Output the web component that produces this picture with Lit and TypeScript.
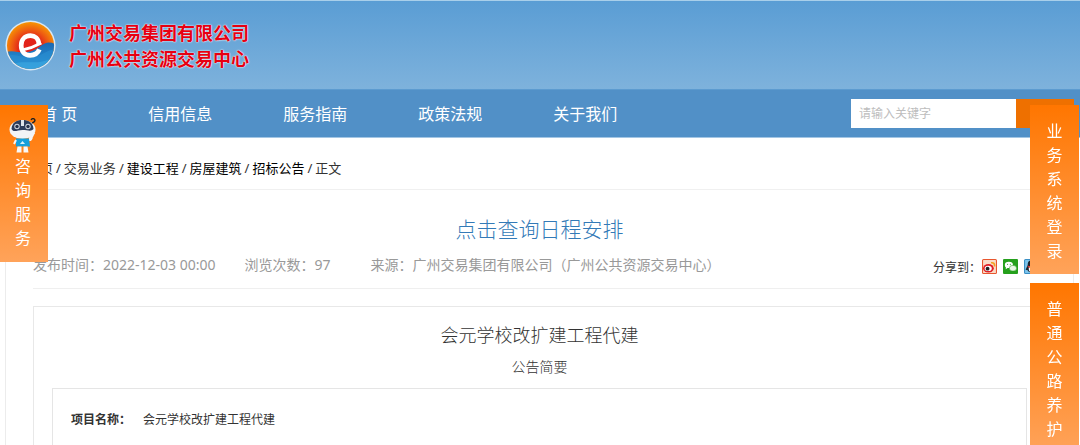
import { LitElement, html, css, svg } from "lit";
import { customElement, property } from "lit/decorators.js";

const logo = svg`
  <defs>
    <radialGradient id="sun" cx="0.5" cy="0.55" r="0.55">
      <stop offset="0.4" stop-color="#e2231a" />
      <stop offset="0.65" stop-color="#ee5a12" />
      <stop offset="1" stop-color="#f8a400" />
    </radialGradient>
    <linearGradient id="sea" x1="0" y1="0" x2="0" y2="1">
      <stop offset="0" stop-color="#1a68b4" />
      <stop offset="1" stop-color="#2a9fdc" />
    </linearGradient>
    <clipPath id="disc"><circle cx="26" cy="26" r="24" /></clipPath>
  </defs>
  <circle cx="26" cy="26" r="25.5" fill="#d9e8f4" />
  <g clip-path="url(#disc)">
    <rect width="52" height="52" fill="url(#sun)" />
    <path d="M0 33C8 30 14 34 22 33C33 32 38 23 44 23Q49 23 52 25V52H0Z" fill="url(#sea)" />
    <path d="M0 36C12 33 20 41 32 37C41 34 44 30 52 30V52H0Z" fill="#2b8fd2" opacity="0.6" />
    <path d="M8 45C20 40 32 47 48 39V52H8Z" fill="#45b4e8" opacity="0.45" />
  </g>
  <path d="M34.500 25C34.500 18.500 30 16 26 16C20 16 16.500 20.500 16.500 26C16.500 32 20 36 25.500 36C30 36 33.500 34 35 30" fill="none" stroke="#fff" stroke-width="4.800" />
  <path d="M18 30.500Q28 28.500 37 23.500" fill="none" stroke="#fff" stroke-width="3" />
`;

const robot = svg`
  <path d="M22 14l4 1-4 8h-3z" fill="#f4f6f8" />
  <ellipse cx="13.500" cy="11.500" rx="13" ry="9.500" fill="#f2f4f6" />
  <path d="M2.500 11C3 4 8 2 13.500 2S24 4 24.500 11C22 14 19 12 13.500 12S5 15 2.500 11Z" fill="#2e3d5b" />
  <rect x="12" y="2" width="3" height="6" fill="#dfe5ec" />
  <circle cx="8" cy="8.500" r="2.700" fill="#cfd6e0" /><circle cx="19" cy="8.500" r="2.700" fill="#cfd6e0" />
  <circle cx="8" cy="8.500" r="1.700" fill="#24304a" /><circle cx="19" cy="8.500" r="1.700" fill="#24304a" />
  <path d="M22 2q2-3 4 0q0 2-3 3" fill="none" stroke="#222" stroke-width="1.300" />
  <path d="M7 20.500h13l1 8H7z" fill="#159fdb" />
  <path d="M11 26l2.500-3 2.500 3z" fill="#d9f2fc" />
  <path d="M7 22l-2 4M21 22l2-2" stroke="#f4f6f8" stroke-width="2" />
  <path d="M8.500 28.500h4v6h-5zM14.500 28.500h4l1 6h-5z" fill="#f7f8fa" />
`;

const shareIcons = [
  { name: "新浪微博", art: svg`
    <rect x="0.500" y="0.500" width="13" height="13" rx="1" fill="#f9dcc8" stroke="#e8562e" />
    <ellipse cx="6" cy="8.600" rx="5" ry="4" fill="#e01e25" />
    <ellipse cx="5.800" cy="8.800" rx="3.300" ry="2.500" fill="#fff" />
    <circle cx="5.200" cy="9" r="1.800" fill="#222" />
    <path d="M8.500 3.500q3.500-.5 3.300 3.500" fill="none" stroke="#f3a01c" stroke-width="1.500" />` },
  { name: "微信", art: svg`
    <rect width="14" height="14" rx="1" fill="#25a01c" />
    <ellipse cx="5.500" cy="5.500" rx="3.800" ry="3" fill="#fff" /><path d="M3 7l-.5 2.500 2.500-1.500z" fill="#fff" />
    <ellipse cx="9.300" cy="8.600" rx="3.400" ry="2.700" fill="#e9f7e6" stroke="#25a01c" stroke-width="0.500" />
    <circle cx="4.300" cy="5" r="0.500" fill="#25a01c" /><circle cx="6.800" cy="5" r="0.500" fill="#25a01c" />` },
  { name: "QQ", art: svg`
    <rect x="0.500" y="0.500" width="13" height="13" rx="1" fill="#7cc4ec" stroke="#3b8fc4" />
    <path d="M7 1.500c-3 0-3.500 2-3.500 4L1.500 10l2 .5C4 13 10 13 10.500 10.500l2-.5-2-4.500c0-2-.5-4-3.500-4z" fill="#1d222b" />
    <ellipse cx="7" cy="9" rx="2.600" ry="3" fill="#fff" /><path d="M3.500 6q3.500 2 7 0v1.500q-3.500 2-7 0z" fill="#e0302a" />` },
];

@customElement("side-tab")
export class SideTab extends LitElement {
  @property() label = "";
  @property({ type: Boolean }) mascot = false;

  static styles = css`
    :host { display: block; }
    .tab {
      display: flex; flex-direction: column; align-items: center;
      padding: 14px 16px 11px; color: #fff; text-decoration: none;
      font-size: 16px; line-height: 24px;
      background: linear-gradient(#ff7600, #ffa35a);
    }
    .mascot-tab { padding: 13px 17px 12px 15px; }
    .robot { width: 28px; height: 36px; margin: 0 -6px; }
  `;

  render() {
    return html`<a class="tab ${this.mascot ? "mascot-tab" : ""}" href="#" aria-label=${this.label}>
      ${this.mascot ? html`<svg class="robot" viewBox="0 0 28 36" aria-hidden="true">${robot}</svg>` : null}
      ${[...this.label].map((c) => html`<span>${c}</span>`)}
    </a>`;
  }
}

@customElement("app-root")
export class AppRoot extends LitElement {
  static styles = css`
    :host {
      display: block; height: 100vh; overflow: hidden; background: #fff; color: #333;
      font-family: "Noto Sans", "Noto Sans CJK SC", sans-serif; font-size: 12px;
    }
    * { box-sizing: border-box; }
    a { color: inherit; text-decoration: none; }
    .header {
      display: flex; align-items: center; gap: 13px; height: 89px; padding: 0 5px;
      border-top: 1px solid #a9cfea; background: linear-gradient(#5a9dd4, #7eb2dc);
    }
    .logo { width: 51px; height: 51px; }
    .org {
      display: grid; margin: 0; font-family: "Noto Sans CJK SC", sans-serif;
      font-size: 18px; font-weight: 700; line-height: 26px; color: #e60012;
      text-shadow: 0 0 1px #fff, 0 0 2px #fff;
    }
    .nav {
      display: flex; align-items: center; justify-content: space-between; height: 49px;
      padding: 0 6px 0 41px; background: #5190c7;
      border-top: 1px solid #5c9bd0; border-bottom: 1px solid #a3c6e4;
    }
    .links { display: flex; gap: 71px; font-size: 16px; line-height: 24px; color: #fff; }
    .search { display: flex; height: 29px; }
    .field {
      width: 165px; padding: 0 8px; border: 0; border-radius: 0; outline: 0; background: #fff;
      font: inherit; color: #333;
    }
    .field::placeholder { color: #bdbdbd; opacity: 1; }
    .go { display: grid; place-items: center; width: 58px; padding: 0; border: 0; background: #ee7000; }
    .page { margin: 0 6px 0 5px; }
    .crumbs {
      display: flex; gap: 3px; padding: 20px 0 11px 22px; font-size: 13px; line-height: 20px;
      border-bottom: 1px solid #f0f0f0; color: #333;
    }
    .crumbs .major { color: #000; }
    .article { min-height: 100vh; padding: 23px 27px; border: 1px solid #ececec; border-top: 0; }
    .schedule {
      margin: 0; font-size: 21px; line-height: 32px; font-weight: 300; text-align: center; color: #337ab7;
    }
    .meta {
      display: flex; justify-content: space-between; padding: 8px 0;
      border-bottom: 1px solid #efefef; font-size: 14px; line-height: 24px; color: #999;
    }
    .facts { display: flex; gap: 29px; }
    .source { margin-left: 11px; }
    .share { display: flex; align-items: center; gap: 6px; padding: 3px 7px 0 0; font-size: 12px; color: #333; }
    .share-label { margin-right: -5px; }
    .share a { display: flex; padding-bottom: 3px; }
    .share svg { width: 15px; height: 15px; }
    .notice { margin-top: 17px; padding: 16px 18px; border: 1px solid #e8e8e8; min-height: 100vh; }
    .name { margin: 0; font-size: 18px; line-height: 24px; font-weight: 300; text-align: center; }
    .brief { margin: 8px 0 9px; font-size: 14px; line-height: 24px; font-weight: 300; text-align: center; }
    .summary { display: flex; gap: 12px; margin: 0; padding: 21px 18px; min-height: 80vh; border: 1px solid #e5e5e5; line-height: 20px; }
    .summary dt { font-weight: 700; }
    .summary dd { margin: 0; }
    .left { position: fixed; top: 105px; left: 0; }
    .right { position: fixed; top: 105px; right: 1px; display: grid; gap: 9px; }
    .right side-tab { width: 49px; }
  `;

  private crumbs = ["首页", "交易业务", "建设工程", "房屋建筑", "招标公告"];

  render() {
    return html`
      <header class="header">
        <svg class="logo" viewBox="0 0 52 52" aria-hidden="true">${logo}</svg>
        <h1 class="org"><span>广州交易集团有限公司</span><span>广州公共资源交易中心</span></h1>
      </header>
      <nav class="nav">
        <div class="links">
          ${["首 页", "信用信息", "服务指南", "政策法规", "关于我们"].map((t) => html`<a href="#">${t}</a>`)}
        </div>
        <form class="search" role="search">
          <input class="field" type="text" placeholder="请输入关键字" aria-label="请输入关键字" />
          <button class="go" type="button" aria-label="搜索">
            <svg width="16" height="16" viewBox="0 0 16 16" fill="none" stroke="#fff" stroke-width="2">
              <circle cx="7" cy="7" r="5" /><path d="M11 11l4 4" />
            </svg>
          </button>
        </form>
      </nav>
      <main class="page">
        <div class="crumbs">
          ${this.crumbs.map((c, i) => html`<a class=${i > 1 ? "major" : ""} href="#">${c}</a><span>/</span>`)}
          <span>正文</span>
        </div>
        <article class="article">
          <h2 class="schedule"><a href="#">点击查询日程安排</a></h2>
          <div class="meta">
            <div class="facts">
              <span>发布时间：2022-12-03 00:00</span>
              <span>浏览次数：97</span>
              <span class="source">来源：广州交易集团有限公司（广州公共资源交易中心）</span>
            </div>
            <div class="share">
              <span class="share-label">分享到：</span>
              ${shareIcons.map((s) => html`<a href="#" aria-label=${s.name}><svg viewBox="0 0 14 14">${s.art}</svg></a>`)}
            </div>
          </div>
          <section class="notice">
            <h3 class="name">会元学校改扩建工程代建</h3>
            <p class="brief">公告简要</p>
            <dl class="summary"><dt>项目名称：</dt><dd>会元学校改扩建工程代建</dd></dl>
          </section>
        </article>
      </main>
      <side-tab class="left" label="咨询服务" mascot></side-tab>
      <aside class="right">
        <side-tab label="业务系统登录"></side-tab>
        <side-tab label="普通公路养护"></side-tab>
      </aside>
    `;
  }
}
